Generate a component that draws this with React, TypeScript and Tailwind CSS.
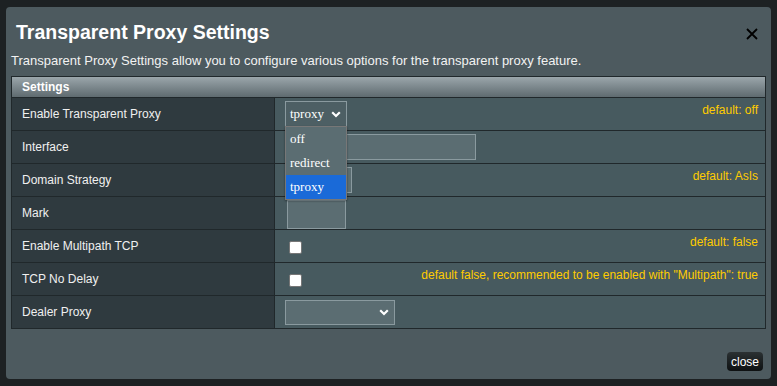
import React from "react";

const Chevron = ({ className = "" }: { className?: string }) => (
  <svg width="10" height="7" viewBox="0 0 10 7" className={className}>
    <path d="M1.2 1.2 L5 5 L8.8 1.2" fill="none" stroke="#fff" strokeWidth="2.2" />
  </svg>
);

const Row = ({
  label,
  children,
  note,
}: {
  label: string;
  children?: React.ReactNode;
  note?: string;
}) => (
  <div className="grid grid-cols-[263px_1fr] h-[33px] border-t border-[#20282b]">
    <div className="bg-[#2f3a3f] border-r border-[#20282b] pl-[10px] flex items-center text-[12px] text-[#f0f0f0]">
      {label}
    </div>
    <div className="bg-[#475a5f] relative flex items-center pl-[10px]">
      {children}
      {note && (
        <span className="absolute right-[7px] top-[3px] text-[12px] text-[#ffcc00]">
          {note}
        </span>
      )}
    </div>
  </div>
);

export default function App() {
  return (
    <div
      className="w-[777px] h-[386px] bg-[#1d2123] pt-[7px] pl-[6px] overflow-hidden"
      style={{ fontFamily: '"Liberation Sans", Arial, sans-serif' }}
    >
      <div className="w-[765px] h-[372px] bg-[#4d5a5f] rounded-[4px] relative pt-[13px] pl-[5px] pr-[5px]">
        <div className="flex items-center justify-between pl-[5px] pr-[8px] h-[26px]">
          <h1 className="text-[19.5px] font-bold text-white leading-none">Transparent Proxy Settings</h1>
          <svg width="12" height="12" viewBox="0 0 12 12" className="mt-[2px]">
            <path d="M1 1 L11 11 M11 1 L1 11" stroke="#000" strokeWidth="1.8" />
          </svg>
        </div>
        <p className="text-[13px] text-[#f2f2f2] mt-[7px] leading-[15px]">
          Transparent Proxy Settings allow you to configure various options for the transparent proxy feature.
        </p>
        <div className="mt-[8px] w-[755px] border border-[#20282b] relative">
          <div className="h-[20px] bg-gradient-to-b from-[#9ba6ab] to-[#5f6b70] pl-[10px] flex items-center text-[12px] font-bold text-white">
            Settings
          </div>
          <Row label="Enable Transparent Proxy" note="default: off">
            <div
              className="w-[62px] h-[26px] border border-[#8a9a9f] bg-[#4d5f64] flex items-center justify-between pl-[4px] pr-[5px] text-[13px] text-white"
              style={{ fontFamily: '"Liberation Serif", "Times New Roman", serif' }}
            >
              <span>tproxy</span>
              <Chevron />
            </div>
          </Row>
          <Row label="Interface">
            <div className="ml-[2px] w-[189px] h-[26px] border border-[#8a9a9f] bg-[#5b6d72]" />
          </Row>
          <Row label="Domain Strategy" note="default: AsIs">
            <div className="ml-[2px] w-[65px] h-[26px] border border-[#8a9a9f] bg-[#5b6d72]" />
          </Row>
          <Row label="Mark">
            <div className="ml-[2px] mt-[2px] w-[59px] h-[29px] border border-[#8a9a9f] bg-[#5b6d72]" />
          </Row>
          <Row label="Enable Multipath TCP" note="default: false">
            <div className="ml-[4px] mt-[2px] w-[13px] h-[13px] bg-white rounded-[2px] border border-[#767676]" />
          </Row>
          <Row
            label="TCP No Delay"
            note={'default false, recommended to be enabled with "Multipath": true'}
          >
            <div className="ml-[4px] mt-[2px] w-[13px] h-[13px] bg-white rounded-[2px] border border-[#767676]" />
          </Row>
          <Row label="Dealer Proxy">
            <div className="w-[110px] h-[25px] border border-[#8a9a9f] bg-[#5b6d72] flex items-center justify-end pr-[5px]">
              <Chevron />
            </div>
          </Row>

          <div
            className="absolute left-[273px] top-[49px] w-[62px] border border-[#777] bg-[#5b6d72] text-[13px] text-white shadow-[0_1px_2px_rgba(0,0,0,0.4)]"
            style={{ fontFamily: '"Liberation Serif", "Times New Roman", serif' }}
          >
            <div className="h-[24px] flex items-center pl-[4px]">off</div>
            <div className="h-[24px] flex items-center pl-[4px]">redirect</div>
            <div className="h-[24px] flex items-center pl-[4px] bg-[#1a6ad8]">tproxy</div>
          </div>
        </div>
        <button className="absolute right-[8px] bottom-[8px] h-[19px] px-[4px] rounded-[4px] bg-gradient-to-b from-[#2b3133] to-[#0e1112] text-white text-[12px] leading-none">
          close
        </button>
      </div>
    </div>
  );
}
